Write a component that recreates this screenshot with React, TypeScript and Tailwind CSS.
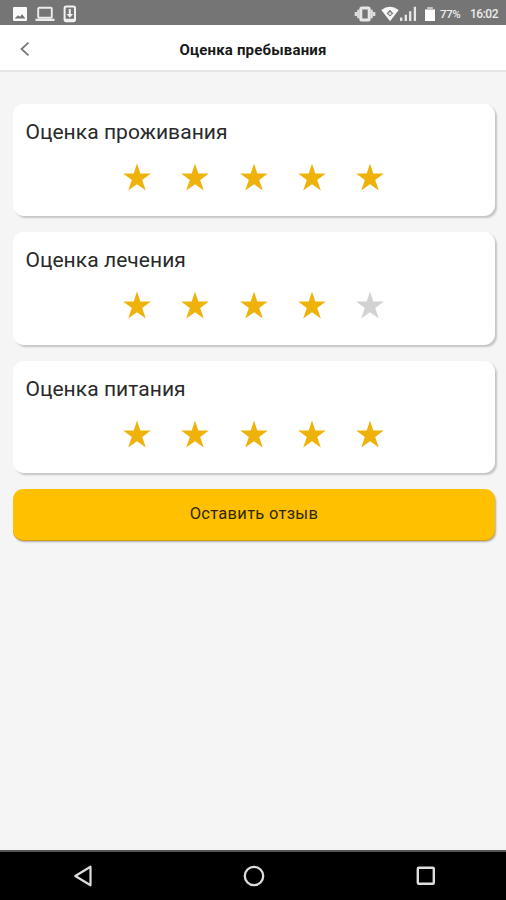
const ratings = [
  { title: "Оценка проживания", value: 5 },
  { title: "Оценка лечения", value: 4 },
  { title: "Оценка питания", value: 5 },
];

function Star({ filled }: { filled: boolean }) {
  return (
    <svg viewBox="0 0 28 28" className={`h-7 w-7 ${filled ? "fill-[#efb20b]" : "fill-[#d2d2d2]"}`}>
      <path d="M14 .4 17.3 10.5 27.8 10.5 19.2 16.9 22.8 27.6 14 21.2 5.2 27.6 8.8 16.9 .2 10.5 10.7 10.5Z" />
    </svg>
  );
}

function StatusBar() {
  return (
    <header className="flex h-[25px] shrink-0 items-center bg-[#757575] pt-[2px] pr-[8px] pl-[12px] text-[#ececec]">
      <svg viewBox="0 0 16 16" className="h-4 w-4">
        <path
          fillRule="evenodd"
          fill="#fafafa"
          d="M2 1h12q1 0 1 1v12q0 1-1 1H2q-1 0-1-1V2q0-1 1-1Zm.5 11.5h11L10 8.2l-2 2.5L6 9.3Z"
        />
      </svg>
      <svg viewBox="0 0 20 16" className="ml-[7px] h-4 w-5">
        <rect x="3.2" y="1.8" width="13.6" height="10" rx="1" fill="none" stroke="currentColor" strokeWidth="1.9" />
        <path d="M.5 12.7h19V15H.5z" fill="currentColor" />
      </svg>
      <svg viewBox="0 0 14 18" className="ml-[8px] h-[18px] w-[14px]">
        <rect x="1.6" y="1.6" width="10.4" height="14.6" rx="1.6" fill="none" stroke="#f2f2f2" strokeWidth="2" />
        <path d="M5.8 4h2v5h2.3l-3.3 3.8L3.5 9h2.3z" fill="#f2f2f2" />
        <path d="M2 13.8h10v2H2z" fill="#f2f2f2" />
      </svg>
      <div className="ml-auto flex items-center">
        <svg viewBox="0 0 22 18" className="h-[18px] w-[22px]">
          <rect x="6.8" y="3" width="8.4" height="12" rx="1" fill="none" stroke="#e7e7e7" strokeWidth="3" />
          <path d="M4.4 4.8v8.4M17.6 4.8v8.4" stroke="#dedede" strokeWidth="2.4" />
          <path d="M2 7v4M20 7v4" stroke="#dedede" strokeWidth="2.6" />
        </svg>
        <svg viewBox="0 0 18 16" className="ml-[5px] h-4 w-[18px]">
          <path d="M.3 4Q9-2.7 17.7 4L9 15.3Z" fill="#fafafa" />
          <path d="m9 3.8 3.3 3.6L9 10.6 5.7 7.4Z" fill="#757575" />
          <circle cx="9" cy="7.4" r="1.5" fill="#ddd" />
        </svg>
        <svg viewBox="0 0 18 16" className="h-4 w-[18px]">
          <path d="M2.2 11.5V15M6.8 8.8V15M11.2 5.2V15M15.9 .8V15" stroke="#e8e8e8" strokeWidth="2.3" />
        </svg>
        <svg viewBox="0 0 12 16" className="ml-[7px] h-4 w-3">
          <path d="M1 3h2.6V1h4.8v2H11v12H1z" fill="#fff" />
          <path d="M1 3h2.6V1h4.8v2H11v1H1z" fill="#c4c4c4" />
        </svg>
        <span className="ml-[4.5px] w-[22px] text-[11.5px] leading-4 font-medium tracking-[-0.4px]">77%</span>
        <span className="ml-[8px] w-[28px] text-[12px] leading-4 font-medium tracking-[-0.5px]">16:02</span>
      </div>
    </header>
  );
}

export default function App() {
  return (
    <div className="flex h-[900px] w-[506px] flex-col overflow-hidden bg-[#f5f5f5] font-['Roboto',sans-serif]">
      <StatusBar />
      <nav className="grid h-[47px] shrink-0 grid-cols-[60px_1fr_60px] items-center border-b-2 border-[#e6e6e6] bg-white pt-[2px]">
        <button aria-label="Назад" className="pl-[20px]">
          <svg viewBox="0 0 10 16" className="h-4 w-[10px]">
            <path d="m8.5 1.7-7 6.3 7 6.3" fill="none" stroke="#777" strokeWidth="1.8" />
          </svg>
        </button>
        <h1 className="pt-[2px] text-center text-[15px] leading-5 font-bold tracking-[0.18px] text-[#191919]">
          Оценка пребывания
        </h1>
      </nav>
      <main className="flex flex-1 flex-col gap-[16px] pt-[32px] pr-[11.5px] pl-[13.4px]">
        {ratings.map((item) => (
          <section
            key={item.title}
            className="h-[112.3px] rounded-[11px] bg-white pt-[16px] shadow-[2px_2px_2px_rgba(0,0,0,0.2)]"
          >
            <h2 className="pl-[12px] text-[21px] leading-[25px] tracking-[0.06px] text-[#292929]">{item.title}</h2>
            <div className="mt-[18px] flex justify-center gap-[30.3px] pr-[0.5px]">
              {[1, 2, 3, 4, 5].map((n) => (
                <Star key={n} filled={n <= item.value} />
              ))}
            </div>
          </section>
        ))}
        <button className="h-[51.5px] rounded-[10px] bg-[#ffc000] pb-px text-[16.5px] tracking-[0.28px] text-[#302707] shadow-[0_1px_0_#d59b16,1px_2px_2px_rgba(0,0,0,0.3)]">
          Оставить отзыв
        </button>
      </main>
      <footer className="flex h-[50px] shrink-0 items-center border-t-2 border-[#555] bg-black pl-[73px]">
        <svg viewBox="0 0 20 22" className="h-[22px] w-5">
          <path d="M17.5 1.7v18.6L2.3 11Z" fill="none" stroke="#ddd" strokeWidth="2.2" strokeLinejoin="round" />
        </svg>
        <svg viewBox="0 0 22 22" className="ml-[150px] h-[22px] w-[22px]">
          <circle cx="11" cy="11" r="9.2" fill="none" stroke="#ddd" strokeWidth="2.3" />
        </svg>
        <svg viewBox="0 0 20 20" className="ml-[151px] h-5 w-5">
          <rect x="1.8" y="1.8" width="16" height="16" rx="1" fill="none" stroke="#ddd" strokeWidth="2.4" />
        </svg>
      </footer>
    </div>
  );
}
